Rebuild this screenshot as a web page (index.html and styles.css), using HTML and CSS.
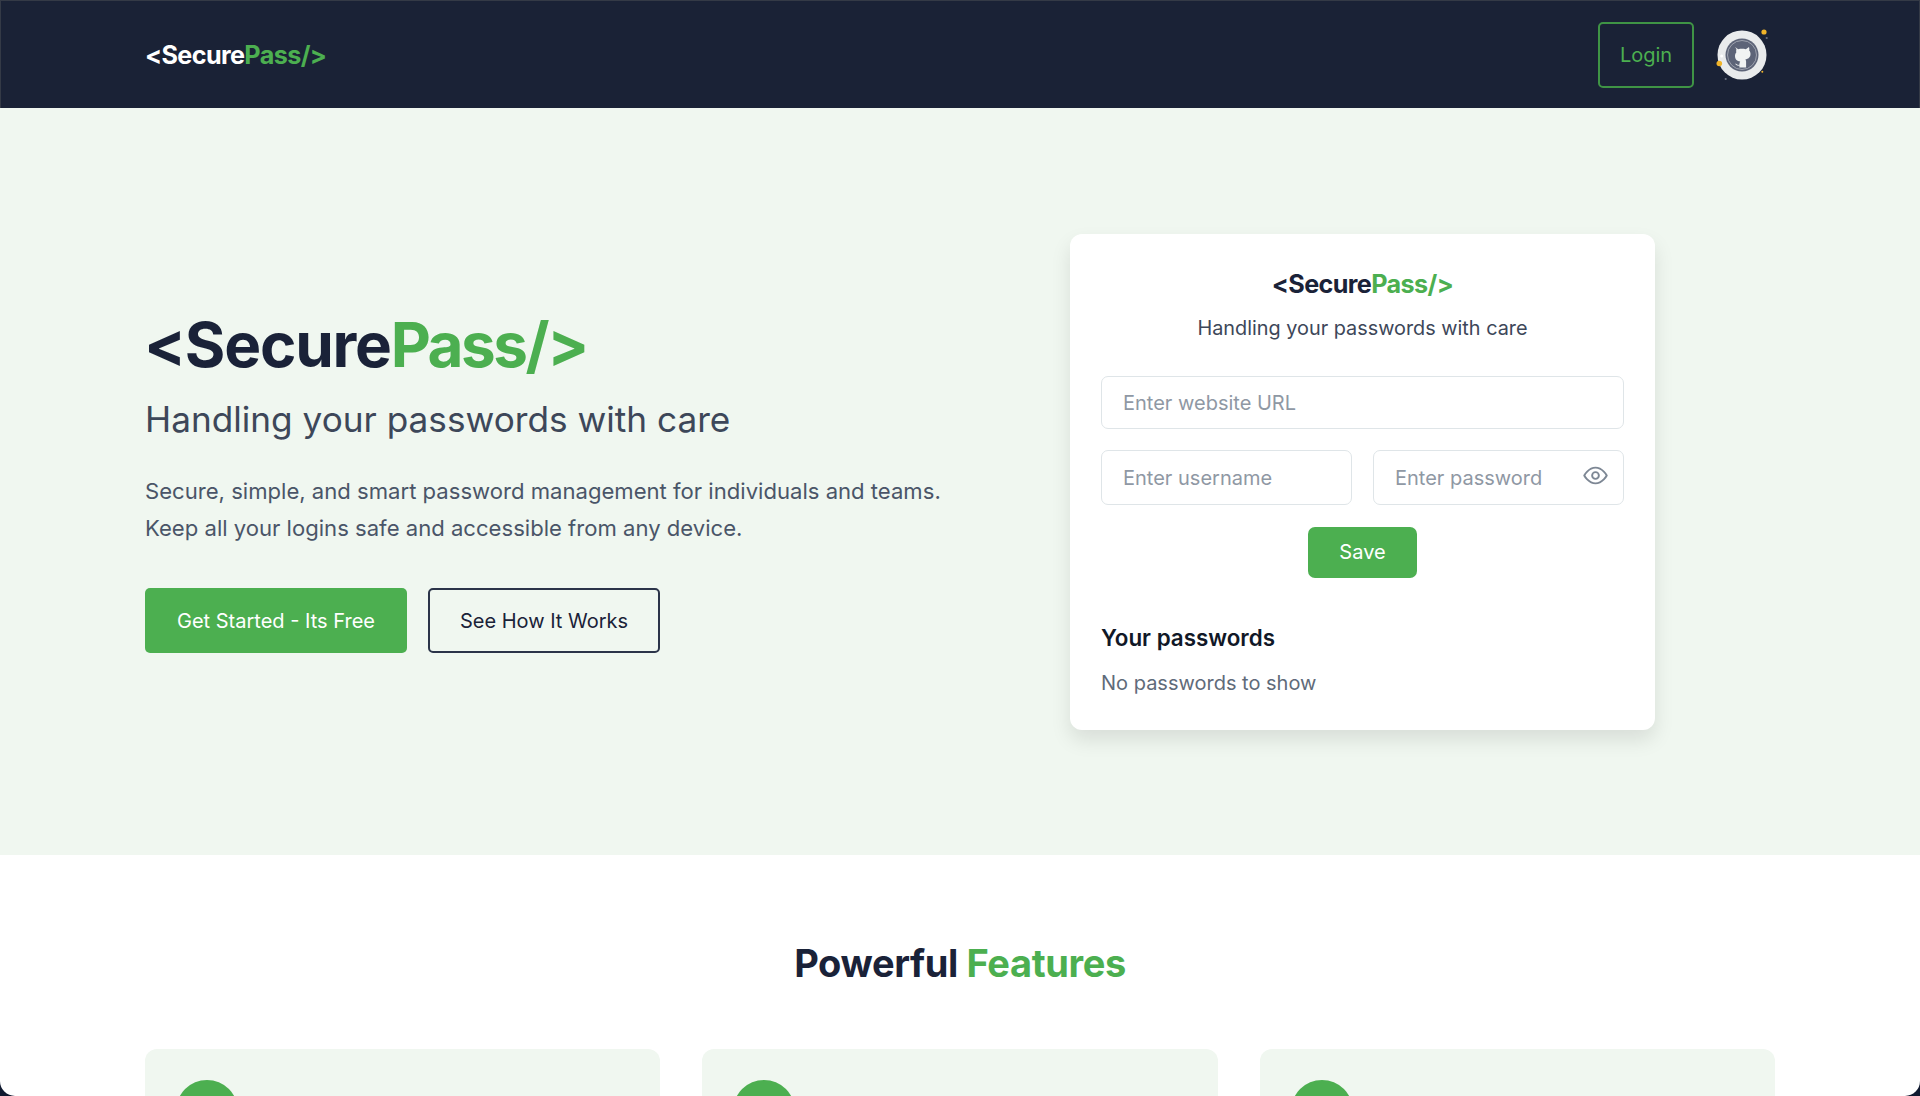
FILE: index.html
```html
<!DOCTYPE html>
<html lang="en">
<head>
    <meta charset="UTF-8">
    <meta name="viewport" content="width=device-width, initial-scale=1.0">
    <title>SecurePass</title>
    <link rel="stylesheet" href="styles.css">
</head>
<body>

  <div class="page">
    <nav class="navbar">
        <div class="logo logo-nav">&lt;Secure<span class="green">Pass/&gt;</span></div>
        <div class="nav-right">
            <button class="btn-login">Login</button>
            <a class="github-badge" href="#" aria-label="GitHub">
                <svg width="60" height="60" viewBox="0 0 60 60">
                    <circle cx="30" cy="30" r="24.5" fill="#e9ebec"/>
                    <circle cx="30" cy="30" r="16.5" fill="#5d6478"/>
                    <circle cx="30" cy="30" r="14.5" fill="none" stroke="#aeb2bc" stroke-width="0.8"/>
                    <path fill="#f1f3f3" d="M23 22l3.200 2.200c2.400-.6 5.200-.6 7.600 0L37 22c.4 1.300.5 2.600.2 3.600 1 1 1.300 2.300 1.300 3.400 0 3.400-2.200 5-5.200 5.400.6.6.8 1.300.8 2.200v6h-6.700v-2c-2.400.4-3.600-.7-4.200-2.200 1 .2 1.700 1 2.400 1.400.6.2 1.200.2 1.800 0 0-1.200.2-2.300.8-3.300-3-.4-5.200-2-5.200-5.500 0-1.100.3-2.400 1.300-3.400-.3-1-.2-2.300.1-3.600z"/>
                    <circle cx="52" cy="7" r="2.600" fill="#f0b429"/>
                    <circle cx="54.700" cy="13" r="1.100" fill="#6b7280"/>
                    <circle cx="7.300" cy="38.500" r="2.800" fill="#f0b429"/>
                    <circle cx="50.300" cy="46.700" r="1" fill="#f0b429"/>
                    <circle cx="13.700" cy="54" r="1.100" fill="#6b7280"/>
                    <circle cx="9.700" cy="31" r="1.500" fill="#ffffff"/>
                </svg>
            </a>
        </div>
    </nav>

    <section class="hero">
        <div class="hero-text">
            <h1 class="logo logo-hero">&lt;Secure<span class="green">Pass/&gt;</span></h1>
            <h2 class="hero-tagline">Handling your passwords with care</h2>
            <p class="hero-desc">Secure, simple, and smart password management for individuals and teams.<br>Keep all your logins safe and accessible from any device.</p>
            <div class="hero-actions">
                <button class="btn btn-primary">Get Started - Its Free</button>
                <button class="btn btn-outline">See How It Works</button>
            </div>
        </div>

        <div class="manager-card">
            <div class="logo logo-card">&lt;Secure<span class="green">Pass/&gt;</span></div>
            <p class="card-tagline">Handling your passwords with care</p>
            <input class="field" type="text" placeholder="Enter website URL">
            <div class="field-row">
                <input class="field" type="text" placeholder="Enter username">
                <div class="password-wrap">
                    <input class="field" type="password" placeholder="Enter password">
                    <svg class="eye-icon" width="27" height="27" viewBox="0 0 24 24" fill="none" stroke="#7d8794" stroke-width="1.700" stroke-linecap="round" stroke-linejoin="round">
                        <path d="M2 12s3.600-7 10-7 10 7 10 7-3.600 7-10 7-10-7-10-7z"/>
                        <circle cx="12" cy="12" r="3"/>
                    </svg>
                </div>
            </div>
            <button class="btn-save">Save</button>
            <h3 class="list-title">Your passwords</h3>
            <p class="list-empty">No passwords to show</p>
        </div>
    </section>

    <section class="features">
        <h2 class="features-title">Powerful <span class="green">Features</span></h2>
        <div class="features-grid">
            <div class="feature-card"><div class="feature-icon"></div></div>
            <div class="feature-card"><div class="feature-icon"></div></div>
            <div class="feature-card"><div class="feature-icon"></div></div>
        </div>
    </section>
  </div>

</body>
</html>
```

FILE: styles.css
```css
* {
    box-sizing: border-box;
}
html, body {
    height: 1096px;
    overflow: hidden;
}
body {
    margin: 0;
    font-family: Inter, "Liberation Sans", sans-serif;
    background-color: #101a30;
    color: #1a2238;
}
.page {
    height: 1096px;
    overflow: hidden;
    background-color: #fff;
    border-radius: 0 0 15px 15px;
}
.green {
    color: #4caf50;
}
.logo {
    font-weight: 700;
    letter-spacing: -0.025em;
}
.navbar {
    height: 108px;
    padding: 2px 145px 0;
    display: flex;
    align-items: center;
    justify-content: space-between;
    background-color: #1a2236;
    box-shadow: inset 0 1px 0 #343a46, inset 1px 0 0 #343a46, inset -1px 0 0 #343a46;
}
.logo-nav {
    font-size: 25.2px;
    color: #fff;
}
.nav-right {
    display: flex;
    align-items: center;
    gap: 18px;
    margin-right: 3px;
}
.btn-login {
    width: 96px;
    height: 66px;
    background: none;
    border: 2px solid #3f9445;
    border-radius: 5px;
    color: #4caf50;
    font-family: inherit;
    font-size: 20px;
}
.github-badge {
    display: block;
    width: 60px;
    height: 60px;
}
.hero {
    height: 747px;
    padding: 0 145px;
    display: flex;
    align-items: center;
    background-color: #f0f7f0;
}
.hero-text {
    width: 925px;
}
.logo-hero {
    margin: 0 0 0 -1px;
    font-size: 62px;
    line-height: 69px;
    letter-spacing: -0.02em;
}
.logo-hero .green {
    letter-spacing: -0.04em;
}
.hero-tagline {
    margin: 18px 0 0;
    font-size: 35.2px;
    font-weight: 400;
    line-height: 44px;
    color: #3d4759;
}
.hero-desc {
    margin: 32px 0 0;
    font-size: 22.1px;
    line-height: 37px;
    color: #4a5568;
}
.hero-actions {
    margin-top: 41px;
    display: flex;
    gap: 21px;
}
.btn {
    height: 65px;
    border-radius: 5px;
    font-family: inherit;
    font-size: 20px;
}
.btn-primary {
    width: 262px;
    border: none;
    background-color: #4caf50;
    color: #fff;
}
.btn-outline {
    width: 232px;
    border: 2px solid #2b3449;
    background: none;
    color: #1a2238;
}
.manager-card {
    width: 585px;
    height: 496px;
    padding: 32px 31px;
    display: flex;
    flex-direction: column;
    background-color: #fff;
    border-radius: 12px;
    box-shadow: 0 10px 20px rgba(0, 0, 0, 0.1);
}
.logo-card {
    font-size: 25.2px;
    line-height: 36px;
    text-align: center;
}
.card-tagline {
    margin: 10px 0 0;
    font-size: 19.85px;
    line-height: 32px;
    text-align: center;
    color: #3d4759;
}
.field {
    width: 100%;
    height: 55px;
    padding: 2px 21px 0;
    border: 1px solid #dfe5e8;
    border-radius: 7px;
    font-family: inherit;
    font-size: 20px;
    color: #1a2238;
    background-color: #fff;
}
.field::placeholder {
    color: #8f98a4;
}
.manager-card > .field {
    margin-top: 32px;
}
.field-row {
    margin-top: 21px;
    display: grid;
    grid-template-columns: 1fr 1fr;
    gap: 21px;
}
.password-wrap {
    position: relative;
}
.eye-icon {
    position: absolute;
    top: 12px;
    right: 15px;
}
.btn-save {
    align-self: center;
    width: 109px;
    height: 52px;
    margin-top: 22px;
    border: none;
    border-radius: 7px;
    background-color: #4caf50;
    color: #fff;
    font-family: inherit;
    font-size: 20px;
}
.list-title {
    margin: 45px 0 0;
    font-size: 22.4px;
    font-weight: 600;
    line-height: 30px;
    color: #111827;
}
.list-empty {
    margin: 15px 0 0;
    font-size: 20px;
    line-height: 30px;
    color: #5f6b7a;
}
.features {
    padding: 86px 145px 0;
}
.features-title {
    margin: 0;
    font-size: 38px;
    font-weight: 700;
    letter-spacing: -0.01em;
    line-height: 44px;
    text-align: center;
}
.features-grid {
    margin-top: 64px;
    display: grid;
    grid-template-columns: repeat(3, 1fr);
    gap: 42px;
}
.feature-card {
    height: 300px;
    padding: 31px;
    background-color: #f0f7f0;
    border-radius: 12px;
}
.feature-icon {
    width: 62px;
    height: 62px;
    border-radius: 50%;
    background-color: #4caf50;
}
```
